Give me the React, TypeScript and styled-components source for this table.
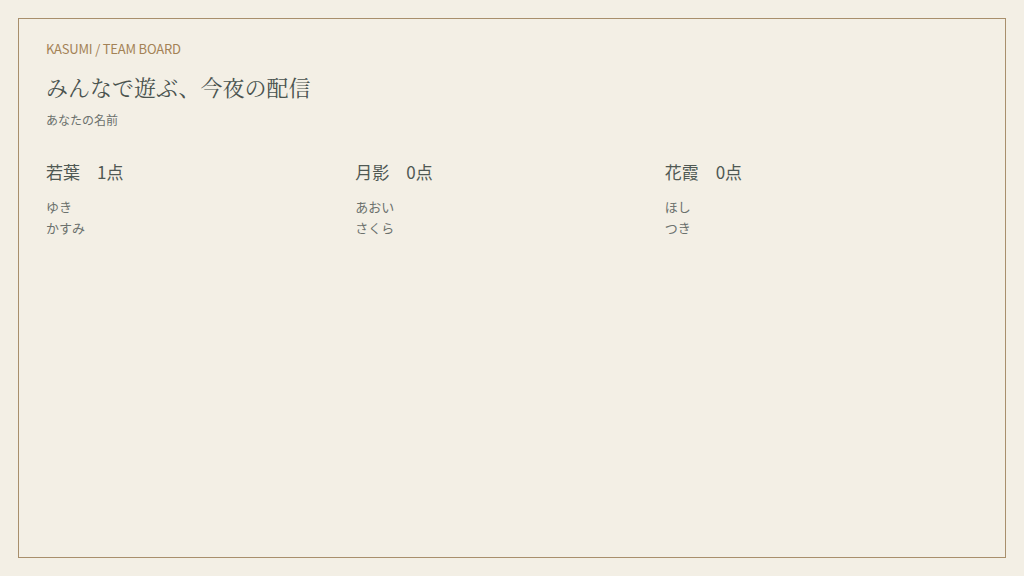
import React from "react";
import styled, { createGlobalStyle } from "styled-components";

const Global = createGlobalStyle`
  html, body { margin: 0; padding: 0; background: #f3efe5; }
  body { font-family: "Noto Sans CJK JP", "Noto Sans", sans-serif; color: #56605b; }
`;

const Page = styled.div`
  padding: 18px;
  height: 576px;
  box-sizing: border-box;
`;

const Frame = styled.main`
  height: 100%;
  box-sizing: border-box;
  border: 1px solid #a88f6c;
  padding: 20px 31px 20px 27px;
`;

const Label = styled.div`
  font-size: 13px;
  line-height: 20px;
  color: #a38256;
  letter-spacing: -0.2px;
`;

const Title = styled.h1`
  margin: 13px 0 0;
  font-family: "Noto Serif CJK JP", "IPAMincho", serif;
  font-weight: 400;
  font-size: 22px;
  line-height: 30px;
  color: #4a534f;
`;

const Sub = styled.div`
  margin-top: 9px;
  font-size: 12px;
  line-height: 18px;
  color: #6b716d;
`;

const Teams = styled.div`
  margin-top: 31px;
  display: grid;
  grid-template-columns: repeat(3, 1fr);
`;

const Team = styled.section`
  display: flex;
  flex-direction: column;
`;

const TeamName = styled.h2`
  margin: 0;
  font-weight: 400;
  font-size: 17px;
  line-height: 24px;
  color: #4f5853;
`;

const Members = styled.ul`
  list-style: none;
  margin: 12px 0 0;
  padding: 0;
`;

const Member = styled.li`
  font-size: 13px;
  line-height: 21px;
  color: #6b716d;
`;

const teams = [
  { name: "若葉", score: 1, members: ["ゆき", "かすみ"] },
  { name: "月影", score: 0, members: ["あおい", "さくら"] },
  { name: "花霞", score: 0, members: ["ほし", "つき"] },
];

export default function App() {
  return (
    <>
      <Global />
      <Page>
        <Frame>
          <Label>KASUMI / TEAM BOARD</Label>
          <Title>みんなで遊ぶ、今夜の配信</Title>
          <Sub>あなたの名前</Sub>
          <Teams>
            {teams.map((t) => (
              <Team key={t.name}>
                <TeamName>
                  {t.name}　{t.score}点
                </TeamName>
                <Members>
                  {t.members.map((m) => (
                    <Member key={m}>{m}</Member>
                  ))}
                </Members>
              </Team>
            ))}
          </Teams>
        </Frame>
      </Page>
    </>
  );
}
